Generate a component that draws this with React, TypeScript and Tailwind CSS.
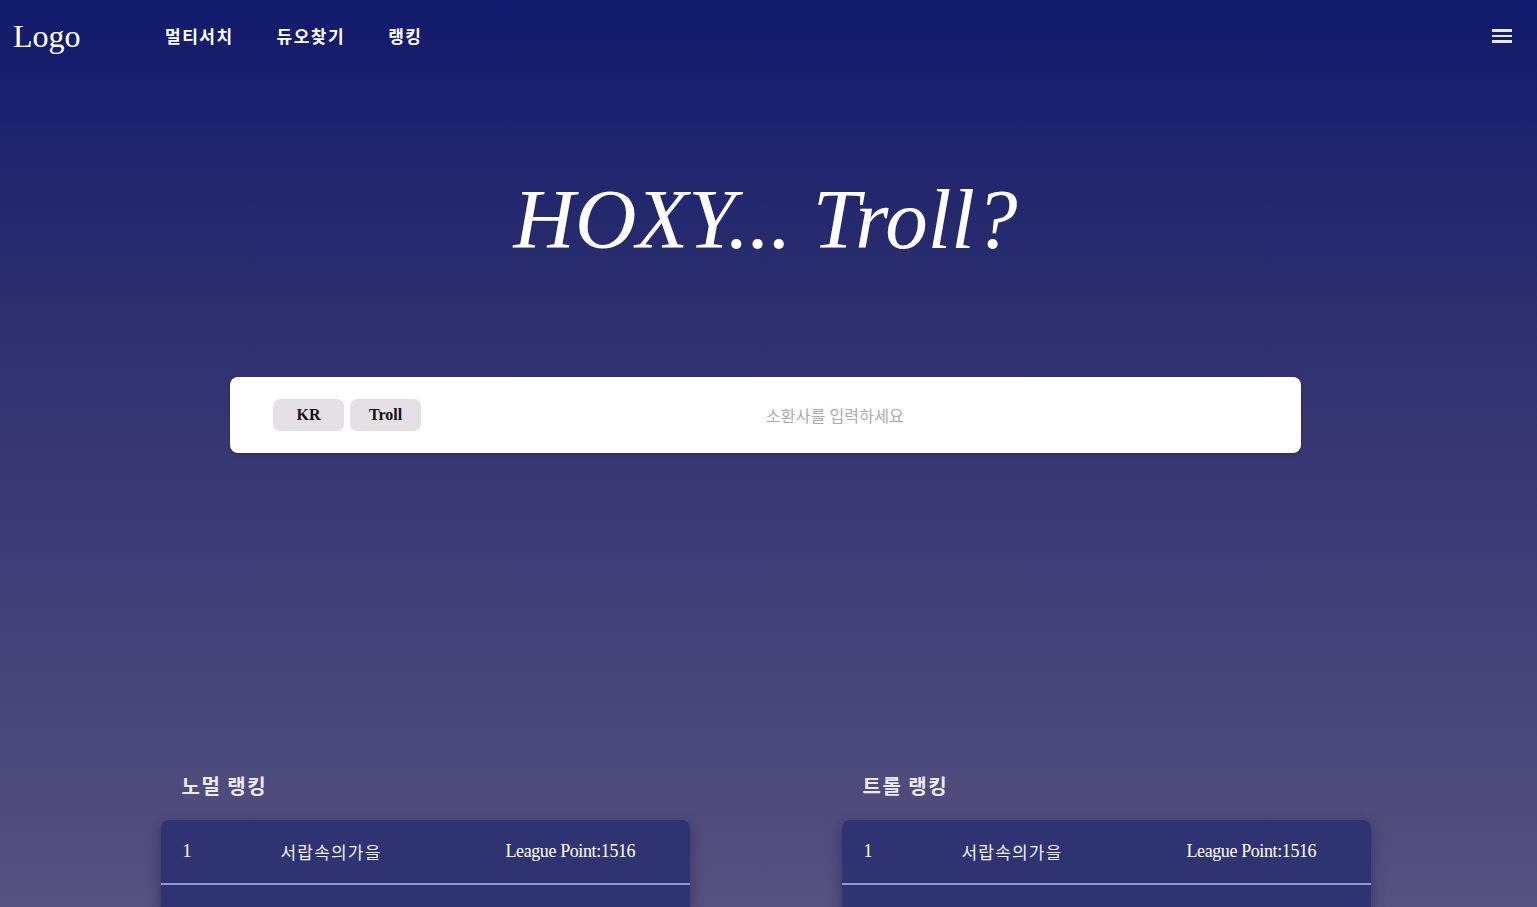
import React from "react";

const serif = "font-['Liberation_Serif','Noto_Sans_CJK_KR',serif]";
const kr = "font-['Noto_Sans_CJK_KR',sans-serif]";

function RankCard({ title }: { title: string }) {
  return (
    <div className="flex flex-col">
      <h2 className={`${kr} pl-[21px] text-[20px] font-bold leading-[28px] tracking-[1.5px] text-[#eceaf4]`}>{title}</h2>
      <div className="mt-[20px] h-[120px] rounded-t-[8px] bg-[#2f3372] shadow-[0_4px_14px_rgba(20,20,60,0.45)]">
        <div className="flex h-[65px] items-center border-b-2 border-[#8c9bdc] text-white">
          <span className={`${serif} w-[120px] pl-[22px] text-[18px]`}>1</span>
          <span className={`${kr} w-[225px] text-[17px] tracking-[1.2px] text-[#f0f0f8]`}>서랍속의가을</span>
          <span className={`${serif} text-[18px] tracking-[-0.4px]`}>League Point:1516</span>
        </div>
      </div>
    </div>
  );
}

export default function App() {
  return (
    <div className="h-[907px] w-full overflow-hidden bg-[linear-gradient(to_bottom,#111a6c_0%,#2c2e6e_33%,#423f78_66%,#55527f_100%)]">
      <nav className="flex h-[72px] items-center px-[13px]">
        <div className={`${serif} w-[152px] text-[32px] leading-none text-white`}>Logo</div>
        <div className={`${kr} flex items-center gap-[43px] text-[17px] font-bold tracking-[1.5px] text-white`}>
          <span>멀티서치</span>
          <span>듀오찾기</span>
          <span>랭킹</span>
        </div>
        <div className="ml-auto mr-[12px] flex flex-col gap-[3px]">
          <span className="block h-[2.5px] w-[20px] bg-[#e8e8f4]" />
          <span className="block h-[2.5px] w-[20px] bg-[#e8e8f4]" />
          <span className="block h-[2.5px] w-[20px] bg-[#e8e8f4]" />
        </div>
      </nav>

      <div className="pr-[6px]">
        <h1 className={`${serif} mt-[105px] text-center text-[85px] leading-[84px] italic text-white`}>
          HOXY... Troll?
        </h1>

        <div className="mx-auto mt-[116px] flex h-[76px] w-[1071px] items-center rounded-[8px] bg-white pl-[43px] shadow-[0_1px_3px_rgba(0,0,0,0.25)]">
          <button className={`${serif} h-[32px] w-[71px] rounded-[7px] bg-[#e5e0e6] text-[16px] font-bold text-[#111]`}>KR</button>
          <button className={`${serif} ml-[6px] h-[32px] w-[71px] rounded-[7px] bg-[#e5e0e6] text-[16px] font-bold text-[#111]`}>Troll</button>
          <input
            className={`${kr} ml-[8px] mr-[60px] flex-1 bg-transparent text-center text-[16px] tracking-[0.2px] text-[#333] outline-none placeholder:text-[#a9a9ae]`}
            placeholder="소환사를 입력하세요"
          />
        </div>

        <div className="mx-auto mt-[319px] grid w-[1210px] grid-cols-2 gap-[152px]">
          <RankCard title="노멀 랭킹" />
          <RankCard title="트롤 랭킹" />
        </div>
      </div>
    </div>
  );
}
